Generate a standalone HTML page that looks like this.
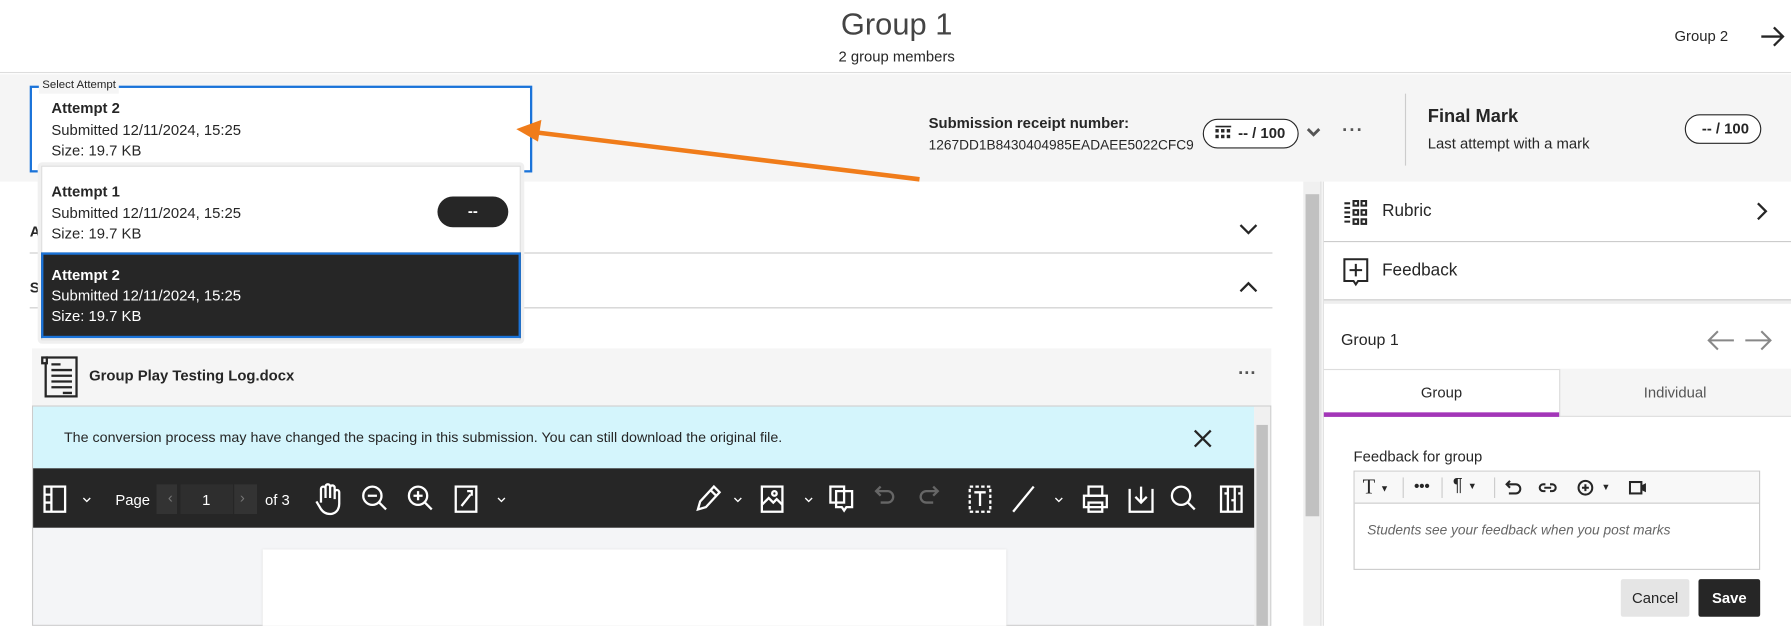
<!DOCTYPE html>
<html><head><meta charset="utf-8"><style>
*{box-sizing:border-box;margin:0;padding:0}
html,body{width:1791px;height:626px;overflow:hidden;background:#fff}
#w{width:1568px;height:548px;position:absolute;left:0;top:0;transform:scale(1.14222);transform-origin:0 0;font-family:"Liberation Sans",sans-serif;color:#262626;font-size:13px;overflow:hidden}
.a{position:absolute}
.t{white-space:nowrap}
</style></head><body><div id="w">
<div class="a" style="left:0;top:0;width:1568px;height:64px;border-bottom:1px solid #ddd;background:#fff"></div>
<div class="a t" style="left:0;width:1570px;top:6px;text-align:center;font-size:27px;color:#444">Group 1</div>
<div class="a t" style="left:0;width:1570px;top:42px;text-align:center;font-size:13px">2 group members</div>
<div class="a t" style="left:1466px;top:24px;font-size:13px">Group 2</div>
<svg class="a" style="left:1540px;top:20px" width="24" height="24" viewBox="0 0 24 24"><path d="M2 12H21M13 4l8 8-8 8" stroke="#262626" stroke-width="2" fill="none"/></svg>
<div class="a" style="left:0;top:65px;width:1568px;height:94px;background:#f5f5f5"></div>
<div class="a" style="left:26px;top:75px;width:440px;height:76px;border:2px solid #1a73d9;background:#fff"></div>
<div class="a t" style="left:34px;top:68px;font-size:10px;background:#f5f5f5;padding:0 3px;line-height:14px">Select Attempt</div>
<div class="a t" style="left:45px;top:87px;font-weight:bold;font-size:13px">Attempt 2</div>
<div class="a t" style="left:45px;top:106px">Submitted 12/11/2024, 15:25</div>
<div class="a t" style="left:45px;top:124px">Size: 19.7 KB</div>
<div class="a t" style="left:813px;top:100px;font-weight:bold">Submission receipt number:</div>
<div class="a t" style="left:813px;top:120px;font-size:12px">1267DD1B8430404985EADAEE5022CFC9</div>
<div class="a" style="left:1053px;top:104px;width:84px;height:26px;border:1px solid #262626;border-radius:13px;background:#fff"></div>
<svg class="a" style="left:1064px;top:110px" width="14" height="14" viewBox="0 0 14 14"><g fill="#262626"><rect x="0" y="0" width="14" height="1.5"/><rect x="0" y="3" width="3" height="3"/><rect x="5" y="3" width="3" height="3"/><rect x="10" y="3" width="3" height="3"/><rect x="0" y="8" width="3" height="3"/><rect x="5" y="8" width="3" height="3"/><rect x="10" y="8" width="3" height="3"/></g></svg>
<div class="a t" style="left:1084px;top:109px;font-weight:bold">-- / 100</div>
<svg class="a" style="left:1143px;top:111px" width="14" height="10" viewBox="0 0 14 10"><path d="M2 2l5 5 5-5" stroke="#555" stroke-width="2.5" fill="none"/></svg>
<div class="a t" style="left:1175px;top:106px;font-size:16px;color:#555;letter-spacing:1px;font-weight:bold">···</div>
<div class="a" style="left:1230px;top:82px;width:1px;height:63px;background:#ccc"></div>
<div class="a t" style="left:1250px;top:94px;font-size:16px;font-weight:bold">Final Mark</div>
<div class="a t" style="left:1250px;top:118px">Last attempt with a mark</div>
<div class="a" style="left:1475px;top:100px;width:67px;height:26px;border:1px solid #262626;border-radius:13px;background:#fff"></div>
<div class="a t" style="left:1490px;top:105px;font-weight:bold">-- / 100</div>
<div class="a t" style="left:26px;top:195px;font-weight:bold">A</div>
<svg class="a" style="left:1084px;top:195px" width="18" height="12" viewBox="0 0 18 12"><path d="M2 2l7 7 7-7" stroke="#262626" stroke-width="2" fill="none"/></svg>
<div class="a" style="left:26px;top:221px;width:1088px;height:1px;background:#ccc"></div>
<div class="a t" style="left:26px;top:244px;font-weight:bold">S</div>
<svg class="a" style="left:1084px;top:245px" width="18" height="12" viewBox="0 0 18 12"><path d="M2 10l7-7 7 7" stroke="#262626" stroke-width="2" fill="none"/></svg>
<div class="a" style="left:26px;top:269px;width:1088px;height:1px;background:#ccc"></div>
<div class="a" style="left:28px;top:305px;width:1085px;height:50px;background:#f5f5f5"></div>
<svg class="a" style="left:35px;top:311px" width="36" height="38" viewBox="0 0 36 38"><path d="M5 2h27v34H5V6" stroke="#262626" stroke-width="2" fill="none"/><path d="M2 2h4v5H2z" stroke="#262626" stroke-width="2" fill="none"/><g stroke="#262626" stroke-width="2"><path d="M10 8h8M10 13h18M10 18h18M10 23h18M10 28h18M20 33h8"/></g></svg>
<div class="a t" style="left:78px;top:321px;font-weight:bold">Group Play Testing Log.docx</div>
<div class="a t" style="left:1084px;top:319px;font-size:16px;font-weight:bold;color:#555">···</div>
<div class="a" style="left:28px;top:355px;width:1085px;height:193px;border:1px solid #ccc;background:#f4f5f7"></div>
<div class="a" style="left:29px;top:356px;width:1069px;height:54px;background:#d4f5fc"></div>
<div class="a t" style="left:56px;top:376px;font-size:12.5px">The conversion process may have changed the spacing in this submission. You can still download the original file.</div>
<svg class="a" style="left:1044px;top:375px" width="18" height="18" viewBox="0 0 18 18"><path d="M2 2l14 14M16 2L2 16" stroke="#262626" stroke-width="2"/></svg>
<div class="a" style="left:1098px;top:356px;width:14px;height:192px;background:#f0f0f0"></div>
<div class="a" style="left:1100px;top:372px;width:10px;height:176px;background:#c1c1c1"></div>
<div class="a" style="left:29px;top:410px;width:1069px;height:52px;background:#262626"></div>
<div class="a" style="left:230px;top:481px;width:651px;height:67px;background:#fff;box-shadow:0 0 2px #ddd"></div>
<svg class="a" style="left:29px;top:410px" width="1069" height="52" viewBox="0 0 1069 52" fill="none" stroke="#fff" stroke-width="2">
<rect x="10" y="16" width="18" height="22"/><path d="M16 16v22M10 23h6M10 30h6"/>
<path d="M44 26l3 3 3-3" stroke-width="1.2"/>
<rect x="108" y="14" width="18" height="26" fill="#333" stroke="none"/><rect x="129" y="14" width="46" height="26" fill="#2e2e2e" stroke="none"/><rect x="176" y="14" width="20" height="26" fill="#333" stroke="none"/>
<path d="M252 30v-12a2 2 0 014 0v8v-10a2 2 0 014 0v10v-9a2 2 0 014 0v10v-6a2 2 0 014 0v10c0 6-4 9-8 9s-7-2-9-6l-3-5"/>
<circle cx="297" cy="24" r="8"/><path d="M303 30l6 6M293 24h8"/>
<circle cx="337" cy="24" r="8"/><path d="M343 30l6 6M333 24h8M337 20v8"/>
<rect x="370" y="16" width="18" height="22"/><path d="M375 33l8-10M380 20h4v4"/>
<path d="M407 26l3 3 3-3" stroke-width="1.2"/>
<path d="M582 36l2-7 12-13 5 5-12 13zM593 19l5 5"/>
<path d="M614 26l3 3 3-3" stroke-width="1.2"/>
<rect x="638" y="16" width="18" height="22"/><path d="M638 32l6-6 4 4 3-3 5 5"/><circle cx="649" cy="22" r="2"/>
<path d="M676 26l3 3 3-3" stroke-width="1.2"/>
<rect x="698" y="16" width="12" height="14"/><path d="M703 20h14v14h-5l-2 3-2-3h-5z"/>
<path d="M742 24l-4-4 4-4M738 20h10a5 5 0 010 10h-6" stroke="#666"/>
<path d="M788 24l4-4-4-4M792 20h-10a5 5 0 000 10h6" stroke="#666"/>
<rect x="820" y="16" width="18" height="22" stroke-dasharray="3 2"/><path d="M824 21h10M829 21v12"/>
<path d="M858 38l18-22"/>
<path d="M895 26l3 3 3-3" stroke-width="1.2"/>
<rect x="920" y="24" width="20" height="10"/><rect x="924" y="16" width="12" height="8"/><rect x="924" y="30" width="12" height="8"/>
<path d="M960 18v20h20V18M970 16v14M965 25l5 5 5-5"/>
<circle cx="1005" cy="24" r="8"/><path d="M1011 30l6 6"/>
<rect x="1040" y="16" width="18" height="22"/><path d="M1046 16v22M1052 16v22M1043 22h2M1049 28h2M1055 22h2"/>
</svg>
<div class="a t" style="left:101px;top:430px;color:#fff">Page</div>
<div class="a t" style="left:177px;top:430px;color:#fff">1</div>
<div class="a t" style="left:147px;top:428px;color:#777">‹</div><div class="a t" style="left:210px;top:428px;color:#777">›</div>
<div class="a t" style="left:232px;top:430px;color:#fff">of 3</div>
<div class="a" style="left:1141px;top:159px;width:16px;height:389px;background:#f0f0f0;border-right:1px solid #ddd"></div>
<div class="a" style="left:1143px;top:170px;width:12px;height:282px;background:#c1c1c1"></div>
<div class="a" style="left:1158px;top:159px;width:1px;height:389px;background:#ddd"></div>
<svg class="a" style="left:1176px;top:175px" width="22" height="22" viewBox="0 0 22 22" fill="none" stroke="#262626" stroke-width="1.8"><path d="M1 3h5M1 7h5M1 11h5M1 15h5M1 19h5"/><rect x="9" y="1" width="4" height="4"/><rect x="16" y="1" width="4" height="4"/><rect x="9" y="9" width="4" height="4"/><rect x="16" y="9" width="4" height="4"/><rect x="9" y="17" width="4" height="4"/><rect x="16" y="17" width="4" height="4"/></svg>
<div class="a t" style="left:1210px;top:176px;font-size:15px">Rubric</div>
<svg class="a" style="left:1536px;top:176px" width="14" height="18" viewBox="0 0 14 18"><path d="M3 2l7 7-7 7" stroke="#262626" stroke-width="2" fill="none"/></svg>
<div class="a" style="left:1159px;top:211px;width:409px;height:1px;background:#ccc"></div>
<svg class="a" style="left:1175px;top:225px" width="24" height="26" viewBox="0 0 24 26" fill="none" stroke="#262626" stroke-width="1.8"><path d="M2 2h20v19H14l-2 3-2-3H2z"/><path d="M12 6v11M6.5 11.5h11"/></svg>
<div class="a t" style="left:1210px;top:228px;font-size:15px">Feedback</div>
<div class="a" style="left:1159px;top:262px;width:409px;height:4px;background:#eee;border-top:1px solid #ccc"></div>
<div class="a t" style="left:1174px;top:289px;font-size:14px">Group 1</div>
<svg class="a" style="left:1494px;top:287px" width="58" height="22" viewBox="0 0 58 22" fill="none" stroke="#888" stroke-width="1.8"><path d="M24 11H2M10 3l-8 8 8 8M34 11h22M48 3l8 8-8 8"/></svg>
<div class="a" style="left:1159px;top:323px;width:409px;height:1px;background:#ddd"></div>
<div class="a" style="left:1365px;top:323px;width:203px;height:42px;background:#f5f5f5;border-left:1px solid #ddd;border-bottom:1px solid #ddd"></div>
<div class="a t" style="left:1159px;width:206px;top:336px;text-align:center">Group</div>
<div class="a t" style="left:1365px;width:203px;top:336px;text-align:center;color:#555">Individual</div>
<div class="a" style="left:1159px;top:361px;width:206px;height:4px;background:#a336b8"></div>
<div class="a t" style="left:1185px;top:392px">Feedback for group</div>
<div class="a" style="left:1185px;top:412px;width:356px;height:87px;border:1px solid #ccc;background:#fff"></div>
<div class="a" style="left:1186px;top:413px;width:354px;height:28px;background:#f8f8f8;border-bottom:1px solid #ccc"></div>
<div class="a t" style="left:1193px;top:416px;font-size:18px;font-family:'Liberation Serif',serif">T <span style="font-size:8px;vertical-align:middle">▼</span></div>
<div class="a" style="left:1228px;top:418px;width:1px;height:18px;background:#ccc"></div>
<div class="a t" style="left:1238px;top:418px;font-weight:bold">•••</div>
<div class="a" style="left:1262px;top:418px;width:1px;height:18px;background:#ccc"></div>
<div class="a t" style="left:1272px;top:417px;font-size:16px">¶ <span style="font-size:8px;vertical-align:middle">▼</span></div>
<div class="a" style="left:1308px;top:418px;width:1px;height:18px;background:#ccc"></div>
<svg class="a" style="left:1317px;top:419px" width="80" height="16" viewBox="0 0 80 16" fill="none" stroke="#262626" stroke-width="1.8"><path d="M5 2L2 5l3 3M2 5h8a4 4 0 010 8H4"/><path d="M36 5h-2a3 3 0 000 6h2M40 5h2a3 3 0 010 6h-2M35 8h6"/><circle cx="71" cy="8" r="6"/><path d="M71 5v6M68 8h6"/></svg>
<div class="a t" style="left:1402px;top:422px;font-size:8px">▼</div>
<svg class="a" style="left:1426px;top:421px" width="16" height="12" viewBox="0 0 16 12"><rect x="1" y="1" width="10" height="10" fill="none" stroke="#262626" stroke-width="1.8"/><path d="M11 4l4-2v8l-4-2z" fill="#262626"/></svg>
<div class="a t" style="left:1197px;top:457px;font-style:italic;color:#666;font-size:12px">Students see your feedback when you post marks</div>
<div class="a" style="left:1419px;top:507px;width:60px;height:33px;background:#e5e5e5;border-radius:2px"></div>
<div class="a t" style="left:1419px;width:60px;top:516px;text-align:center">Cancel</div>
<div class="a" style="left:1487px;top:507px;width:54px;height:33px;background:#262626;border-radius:2px"></div>
<div class="a t" style="left:1487px;width:54px;top:516px;text-align:center;color:#fff;font-weight:bold">Save</div>
<div class="a" style="left:33px;top:142px;width:426px;height:159px;background:#f0f0f0;border-radius:4px"></div>
<div class="a" style="left:36px;top:145px;width:420px;height:153px;background:#fff;border:1px solid #ddd"></div>
<div class="a t" style="left:45px;top:160px;font-weight:bold">Attempt 1</div>
<div class="a t" style="left:45px;top:179px">Submitted 12/11/2024, 15:25</div>
<div class="a t" style="left:45px;top:197px">Size: 19.7 KB</div>
<div class="a" style="left:383px;top:172px;width:62px;height:27px;background:#262626;border-radius:14px"></div>
<div class="a t" style="left:383px;width:62px;top:177px;text-align:center;color:#fff;font-weight:bold">--</div>
<div class="a" style="left:36px;top:221px;width:420px;height:75px;background:#262626;border:2px solid #1a73d9"></div>
<div class="a t" style="left:45px;top:233px;font-weight:bold;color:#fff">Attempt 2</div>
<div class="a t" style="left:45px;top:251px;color:#fff">Submitted 12/11/2024, 15:25</div>
<div class="a t" style="left:45px;top:269px;color:#fff">Size: 19.7 KB</div>
<svg class="a" style="left:0;top:0" width="1568" height="548"><path d="M805 157L470 116" stroke="#f07c1a" stroke-width="4"/><path d="M452 113l22-8-3 19z" fill="#f07c1a"/></svg>
</div></body></html>
